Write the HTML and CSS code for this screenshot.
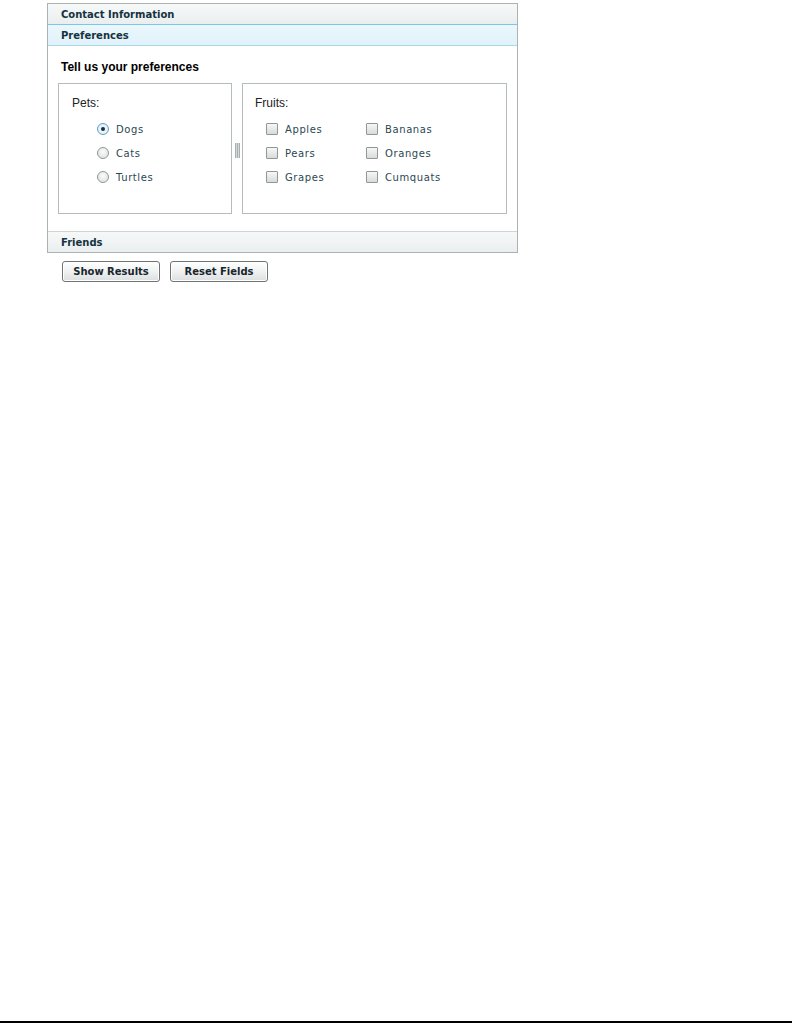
FILE: index.html
```html
<!DOCTYPE html>
<html>
<head>
<meta charset="utf-8">
<link rel="stylesheet" href="styles.css">
</head>
<body>
<div class="page">
  <div class="accordion">
    <div class="acc-head">Contact Information</div>
    <div class="acc-head active">Preferences</div>
    <div class="acc-body">
      <div class="title">Tell us your preferences</div>
      <div class="split">
        <div class="box pets">
          <div class="box-label">Pets:</div>
          <div class="radios">
            <div class="opt"><span class="radio on"></span><span class="txt">Dogs</span></div>
            <div class="opt"><span class="radio"></span><span class="txt">Cats</span></div>
            <div class="opt"><span class="radio"></span><span class="txt">Turtles</span></div>
          </div>
        </div>
        <div class="divider"><span class="grip"></span></div>
        <div class="box fruits">
          <div class="box-label">Fruits:</div>
          <div class="checks">
            <div class="opt"><span class="check"></span><span class="txt">Apples</span></div>
            <div class="opt"><span class="check"></span><span class="txt">Bananas</span></div>
            <div class="opt"><span class="check"></span><span class="txt">Pears</span></div>
            <div class="opt"><span class="check"></span><span class="txt">Oranges</span></div>
            <div class="opt"><span class="check"></span><span class="txt">Grapes</span></div>
            <div class="opt"><span class="check"></span><span class="txt">Cumquats</span></div>
          </div>
        </div>
      </div>
    </div>
    <div class="acc-head last">Friends</div>
  </div>
  <div class="buttons">
    <button class="btn">Show Results</button>
    <button class="btn">Reset Fields</button>
  </div>
</div>
</body>
</html>
```

FILE: styles.css
```css
html {
  height: 1023px;
  box-sizing: border-box;
  border-bottom: 2px solid #000;
  background: #fff;
}
body {
  margin: 0;
  font-family: "DejaVu Sans", Verdana, sans-serif;
}
.page {
  padding: 3px 0 0 47px;
}
.accordion {
  width: 469px;
  border: 1px solid #aab2b2;
}
.acc-head {
  height: 20px;
  line-height: 21px;
  padding-left: 13px;
  font-size: 10px;
  font-weight: bold;
  color: #15323f;
  background: linear-gradient(#f7f9f9, #e9eeee);
}
.acc-head.active {
  border-top: 1px solid #7ec6e8;
  border-bottom: 1px solid #a9d6ea;
  background: linear-gradient(#eaf7fd, #e1f2fa);
}
.acc-head.last {
  border-top: 1px solid #cdd5d5;
}
.acc-body {
  padding: 14px 9px 17px 10px;
  height: 154px;
}
.title {
  font-family: "Liberation Sans", Arial, sans-serif;
  font-weight: bold;
  font-size: 12px;
  color: #000;
  padding-left: 3px;
  height: 23px;
}
.split {
  display: flex;
  height: 131px;
}
.box {
  border: 1px solid #b4bcbc;
  box-sizing: border-box;
  height: 131px;
}
.pets { width: 174px; }
.fruits { width: 265px; }
.divider {
  width: 10px;
  display: flex;
  align-items: center;
  justify-content: center;
}
.grip {
  width: 5px;
  height: 15px;
  margin-top: 3px;
  background: repeating-linear-gradient(90deg, #a9b0b0 0 1px, #d4d8d8 1px 2px);
}
.box-label {
  font-family: "Liberation Sans", Arial, sans-serif;
  font-size: 12px;
  color: #222;
  padding: 12px 0 0 13px;
  height: 21px;
}
.fruits .box-label { padding-left: 12px; }
.radios {
  padding-left: 38px;
}
.checks {
  display: grid;
  grid-template-columns: 100px 100px;
  padding-left: 23px;
}
.opt {
  display: flex;
  align-items: center;
  height: 24px;
}
.txt {
  font-size: 10px;
  letter-spacing: 0.6px;
  color: #2b4853;
  margin-left: 7px;
}
.radio {
  width: 10px;
  height: 10px;
  border: 1px solid #8e9898;
  border-radius: 50%;
  background: radial-gradient(circle at 50% 40%, #fafafa, #dadede);
  display: flex;
  align-items: center;
  justify-content: center;
}
.radio.on {
  border-color: #5f9fc6;
  background: radial-gradient(circle, #f6fbfd, #d9ecf6);
}
.radio.on::after {
  content: "";
  width: 4px;
  height: 4px;
  border-radius: 50%;
  background: #1d2e36;
}
.check {
  width: 10px;
  height: 10px;
  border: 1px solid #8f9797;
  border-radius: 1px;
  background: linear-gradient(#f6f6f6, #d8dbdb);
}
.buttons {
  display: flex;
  gap: 10px;
  padding: 8px 0 0 15px;
}
.btn {
  width: 98px;
  height: 21px;
  padding: 0;
  border: 1px solid #6f7575;
  border-radius: 3px;
  background: linear-gradient(#ffffff, #f0f1f1 50%, #dcdfdf);
  box-shadow: inset 0 0 0 1px #fff;
  font-family: "DejaVu Sans", Verdana, sans-serif;
  font-size: 10px;
  font-weight: bold;
  color: #17262d;
}
```
